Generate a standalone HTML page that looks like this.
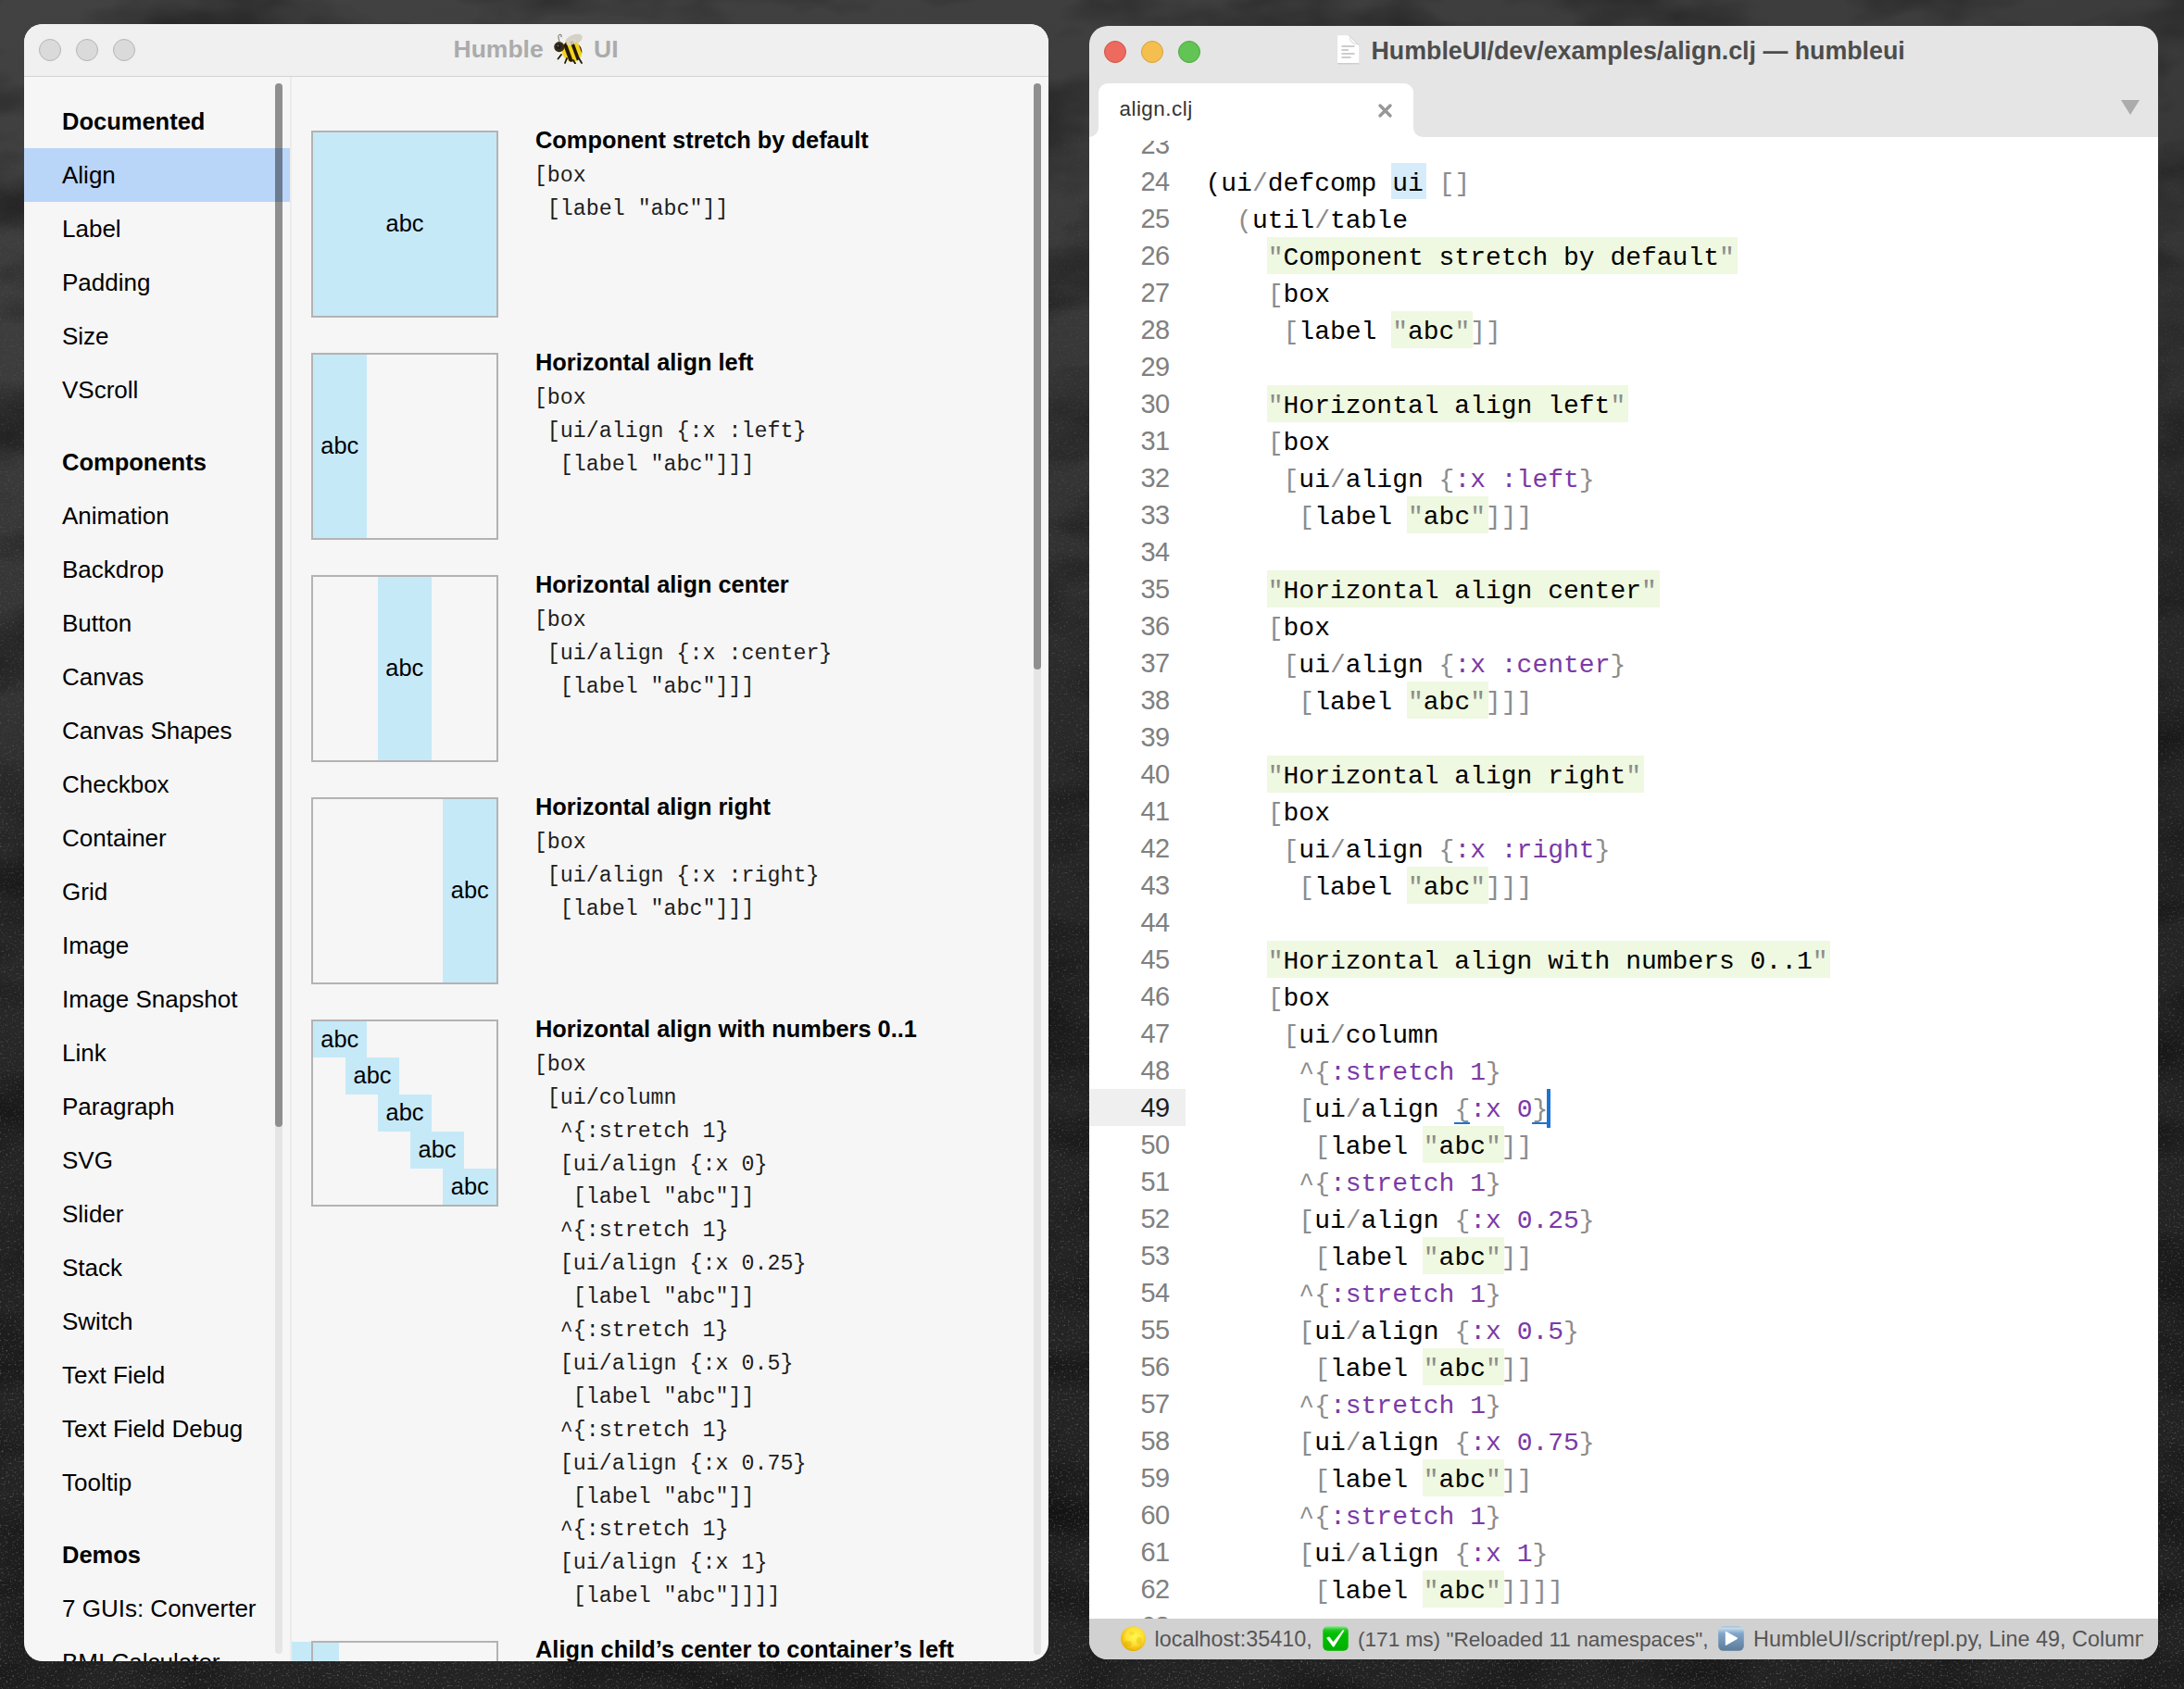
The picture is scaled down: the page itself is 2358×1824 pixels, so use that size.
<!DOCTYPE html>
<html><head><meta charset="utf-8"><title>Humble UI</title>
<style>
html,body{margin:0;padding:0;}
body{width:2358px;height:1824px;overflow:hidden;position:relative;
background:linear-gradient(170deg,#424242 0%,#3c3c3c 18%,#333 34%,#2a2a2a 42%,#252525 55%,#222 100%);}
.bgn{position:absolute;left:0;top:0;width:2358px;height:1824px;}
.win{position:absolute;border-radius:20px;overflow:hidden;}
.inner{position:absolute;width:2358px;height:1824px;}
.r{position:absolute;box-sizing:content-box;}
.ts{position:absolute;font-family:"Liberation Sans", sans-serif;white-space:pre;}
.tm{position:absolute;font-family:"Liberation Mono", monospace;white-space:pre;}
</style></head><body>
<svg class="bgn" width="2358" height="1824" viewBox="0 0 2358 1824">
<defs>
<filter id="nz" x="0" y="0" width="100%" height="100%"><feTurbulence type="fractalNoise" baseFrequency="0.006 0.012" numOctaves="4" seed="11"/>
<feColorMatrix type="matrix" values="0 0 0 0 0  0 0 0 0 0  0 0 0 0 0  -2.2 0 0 0 1.25"/></filter>
<filter id="sp" x="0" y="0" width="100%" height="100%"><feTurbulence type="fractalNoise" baseFrequency="0.45" numOctaves="2" seed="5"/>
<feColorMatrix type="matrix" values="0 0 0 0 1  0 0 0 0 1  0 0 0 0 1  3 0 0 0 -1.75"/></filter>
<linearGradient id="spm" x1="0" y1="0" x2="0" y2="1"><stop offset="0" stop-color="#fff" stop-opacity="0"/><stop offset="0.35" stop-color="#fff" stop-opacity="0.5"/><stop offset="1" stop-color="#fff" stop-opacity="1"/></linearGradient>
<mask id="spmask"><rect width="2358" height="1824" fill="url(#spm)"/></mask>
</defs>
<rect width="2358" height="1824" filter="url(#nz)" opacity="0.45"/>
<g mask="url(#spmask)"><rect width="2358" height="1824" filter="url(#sp)" opacity="0.3"/></g>
</svg>
<div class="win" style="left:26px;top:26px;width:1106px;height:1768px;background:#f6f6f6;">
<div class="inner" style="left:-26px;top:-26px;">
<div class="r" style="left:26.00px;top:26.00px;width:1106.00px;height:56.00px;background:#f0f0f0;"></div>
<div class="r" style="left:26.00px;top:82.00px;width:1106.00px;height:1.00px;background:#d3d3d3;"></div>
<div class="r" style="left:42px;top:42px;width:22px;height:22px;border-radius:50%;background:#dadada;border:1px solid #b4b4b4;"></div>
<div class="r" style="left:82px;top:42px;width:22px;height:22px;border-radius:50%;background:#dadada;border:1px solid #b4b4b4;"></div>
<div class="r" style="left:122px;top:42px;width:22px;height:22px;border-radius:50%;background:#dadada;border:1px solid #b4b4b4;"></div>
<div class="ts" style="left:489.50px;top:35.71px;font-size:26.5px;line-height:34px;color:#ababab;font-weight:bold;">Humble</div>
<svg class="r" style="left:597.5px;top:35.5px;" width="33" height="33" viewBox="0 0 33 33">
<defs><clipPath id="bc"><ellipse cx="19.5" cy="19.5" rx="10.5" ry="11.5" transform="rotate(-25 19.5 19.5)"/></clipPath></defs>
<path d="M6 9 C5 5 4 2 6 1.5 C8 1 9 3 7.5 4" stroke="#8a8578" stroke-width="1.2" fill="none"/>
<ellipse cx="21.5" cy="6.8" rx="9.8" ry="5.3" fill="#d6d1c4" transform="rotate(-22 21.5 6.8)"/>
<ellipse cx="19.5" cy="19.5" rx="10.5" ry="11.5" fill="#f4d41e" transform="rotate(-25 19.5 19.5)"/>
<g clip-path="url(#bc)">
<path d="M11 9 L19 31" stroke="#231a05" stroke-width="4"/>
<path d="M18.5 7 L27 30" stroke="#231a05" stroke-width="3.6"/>
<path d="M26 6 L33 26" stroke="#231a05" stroke-width="2.5"/>
</g>
<ellipse cx="19" cy="9.5" rx="6" ry="3" fill="#dcd7cb" opacity="0.85" transform="rotate(-22 19 9.5)"/>
<circle cx="5.8" cy="14.6" r="5.6" fill="#3b2c0c"/>
<circle cx="5.2" cy="14.2" r="2.8" fill="#1b1e28"/>
<circle cx="4.4" cy="13.3" r="0.9" fill="#6d7890"/>
<path d="M8 23 L4.5 27.5 M14 27 L12 32 M21 29 L23 32.5 M27 27 L30 32" stroke="#231a05" stroke-width="1.8" stroke-linecap="round"/>
</svg>
<div class="ts" style="left:641.00px;top:35.71px;font-size:26.5px;line-height:34px;color:#ababab;font-weight:bold;">UI</div>
<div class="r" style="left:26.00px;top:160.00px;width:287.00px;height:58.00px;background:#b9d5f8;"></div>
<div class="r" style="left:313.00px;top:83.00px;width:2.00px;height:1711.00px;background:#ececec;"></div>
<div class="ts" style="left:67.00px;top:114.66px;font-size:25.5px;line-height:33px;color:#000;font-weight:bold;">Documented</div>
<div class="ts" style="left:67.00px;top:171.99px;font-size:26px;line-height:34px;color:#000;">Align</div>
<div class="ts" style="left:67.00px;top:229.99px;font-size:26px;line-height:34px;color:#000;">Label</div>
<div class="ts" style="left:67.00px;top:287.99px;font-size:26px;line-height:34px;color:#000;">Padding</div>
<div class="ts" style="left:67.00px;top:345.99px;font-size:26px;line-height:34px;color:#000;">Size</div>
<div class="ts" style="left:67.00px;top:403.99px;font-size:26px;line-height:34px;color:#000;">VScroll</div>
<div class="ts" style="left:67.00px;top:482.66px;font-size:25.5px;line-height:33px;color:#000;font-weight:bold;">Components</div>
<div class="ts" style="left:67.00px;top:539.99px;font-size:26px;line-height:34px;color:#000;">Animation</div>
<div class="ts" style="left:67.00px;top:597.99px;font-size:26px;line-height:34px;color:#000;">Backdrop</div>
<div class="ts" style="left:67.00px;top:655.99px;font-size:26px;line-height:34px;color:#000;">Button</div>
<div class="ts" style="left:67.00px;top:713.99px;font-size:26px;line-height:34px;color:#000;">Canvas</div>
<div class="ts" style="left:67.00px;top:771.99px;font-size:26px;line-height:34px;color:#000;">Canvas Shapes</div>
<div class="ts" style="left:67.00px;top:829.99px;font-size:26px;line-height:34px;color:#000;">Checkbox</div>
<div class="ts" style="left:67.00px;top:887.99px;font-size:26px;line-height:34px;color:#000;">Container</div>
<div class="ts" style="left:67.00px;top:945.99px;font-size:26px;line-height:34px;color:#000;">Grid</div>
<div class="ts" style="left:67.00px;top:1003.99px;font-size:26px;line-height:34px;color:#000;">Image</div>
<div class="ts" style="left:67.00px;top:1061.99px;font-size:26px;line-height:34px;color:#000;">Image Snapshot</div>
<div class="ts" style="left:67.00px;top:1119.99px;font-size:26px;line-height:34px;color:#000;">Link</div>
<div class="ts" style="left:67.00px;top:1177.99px;font-size:26px;line-height:34px;color:#000;">Paragraph</div>
<div class="ts" style="left:67.00px;top:1235.99px;font-size:26px;line-height:34px;color:#000;">SVG</div>
<div class="ts" style="left:67.00px;top:1293.99px;font-size:26px;line-height:34px;color:#000;">Slider</div>
<div class="ts" style="left:67.00px;top:1351.99px;font-size:26px;line-height:34px;color:#000;">Stack</div>
<div class="ts" style="left:67.00px;top:1409.99px;font-size:26px;line-height:34px;color:#000;">Switch</div>
<div class="ts" style="left:67.00px;top:1467.99px;font-size:26px;line-height:34px;color:#000;">Text Field</div>
<div class="ts" style="left:67.00px;top:1525.99px;font-size:26px;line-height:34px;color:#000;">Text Field Debug</div>
<div class="ts" style="left:67.00px;top:1583.99px;font-size:26px;line-height:34px;color:#000;">Tooltip</div>
<div class="ts" style="left:67.00px;top:1662.66px;font-size:25.5px;line-height:33px;color:#000;font-weight:bold;">Demos</div>
<div class="ts" style="left:67.00px;top:1719.99px;font-size:26px;line-height:34px;color:#000;">7 GUIs: Converter</div>
<div class="ts" style="left:67.00px;top:1777.99px;font-size:26px;line-height:34px;color:#000;">BMI Calculator</div>
<div class="r" style="left:297.00px;top:90.00px;width:8.00px;height:1696.00px;background:rgba(0,0,0,0.065);border-radius:4px;"></div>
<div class="r" style="left:297.00px;top:90.00px;width:8.00px;height:1127.00px;background:rgba(0,0,0,0.375);border-radius:4px;"></div>
<div class="r" style="left:337.50px;top:142.50px;width:199.00px;height:199.00px;background:#c6e9f8;"></div>
<div class="r" style="left:336px;top:141px;width:198px;height:198px;border:2px solid #b3b3b3;"></div>
<div class="ts" style="left:397.00px;top:224.19px;width:80px;text-align:center;font-size:25.4px;line-height:34px;color:#000;">abc</div>
<div class="r" style="left:337.50px;top:382.50px;width:58.50px;height:199.00px;background:#c6e9f8;"></div>
<div class="r" style="left:336px;top:381px;width:198px;height:198px;border:2px solid #b3b3b3;"></div>
<div class="ts" style="left:326.75px;top:464.19px;width:80px;text-align:center;font-size:25.4px;line-height:34px;color:#000;">abc</div>
<div class="r" style="left:407.50px;top:622.50px;width:58.50px;height:199.00px;background:#c6e9f8;"></div>
<div class="r" style="left:336px;top:621px;width:198px;height:198px;border:2px solid #b3b3b3;"></div>
<div class="ts" style="left:396.75px;top:704.19px;width:80px;text-align:center;font-size:25.4px;line-height:34px;color:#000;">abc</div>
<div class="r" style="left:478.00px;top:862.50px;width:58.50px;height:199.00px;background:#c6e9f8;"></div>
<div class="r" style="left:336px;top:861px;width:198px;height:198px;border:2px solid #b3b3b3;"></div>
<div class="ts" style="left:467.25px;top:944.19px;width:80px;text-align:center;font-size:25.4px;line-height:34px;color:#000;">abc</div>
<div class="r" style="left:337.50px;top:1102.50px;width:58.50px;height:39.80px;background:#c6e9f8;"></div>
<div class="r" style="left:373.00px;top:1142.30px;width:58.00px;height:39.80px;background:#c6e9f8;"></div>
<div class="r" style="left:408.00px;top:1182.10px;width:58.00px;height:39.80px;background:#c6e9f8;"></div>
<div class="r" style="left:443.00px;top:1221.90px;width:58.00px;height:39.80px;background:#c6e9f8;"></div>
<div class="r" style="left:478.00px;top:1261.70px;width:58.50px;height:39.80px;background:#c6e9f8;"></div>
<div class="r" style="left:336px;top:1101px;width:198px;height:198px;border:2px solid #b3b3b3;"></div>
<div class="ts" style="left:326.75px;top:1104.59px;width:80px;text-align:center;font-size:25.4px;line-height:34px;color:#000;">abc</div>
<div class="ts" style="left:362.00px;top:1144.39px;width:80px;text-align:center;font-size:25.4px;line-height:34px;color:#000;">abc</div>
<div class="ts" style="left:397.00px;top:1184.19px;width:80px;text-align:center;font-size:25.4px;line-height:34px;color:#000;">abc</div>
<div class="ts" style="left:432.00px;top:1223.99px;width:80px;text-align:center;font-size:25.4px;line-height:34px;color:#000;">abc</div>
<div class="ts" style="left:467.25px;top:1263.79px;width:80px;text-align:center;font-size:25.4px;line-height:34px;color:#000;">abc</div>
<div class="r" style="left:315px;top:1772.5px;width:51px;height:60px;background:#c6e9f8;"></div>
<div class="r" style="left:336px;top:1771.5px;width:198px;height:198px;border:2px solid #b3b3b3;"></div>
<div class="ts" style="left:578.00px;top:134.89px;font-size:25.4px;line-height:33px;color:#000;font-weight:bold;">Component stretch by default</div>
<div class="tm" style="left:576.80px;top:174.80px;font-size:23.3px;line-height:30px;color:#1e1e1e;">[box</div>
<div class="tm" style="left:576.80px;top:210.70px;font-size:23.3px;line-height:30px;color:#1e1e1e;">&nbsp;[label&nbsp;&quot;abc&quot;]]</div>
<div class="ts" style="left:578.00px;top:374.89px;font-size:25.4px;line-height:33px;color:#000;font-weight:bold;">Horizontal align left</div>
<div class="tm" style="left:576.80px;top:414.80px;font-size:23.3px;line-height:30px;color:#1e1e1e;">[box</div>
<div class="tm" style="left:576.80px;top:450.70px;font-size:23.3px;line-height:30px;color:#1e1e1e;">&nbsp;[ui/align&nbsp;{:x&nbsp;:left}</div>
<div class="tm" style="left:576.80px;top:486.60px;font-size:23.3px;line-height:30px;color:#1e1e1e;">&nbsp;&nbsp;[label&nbsp;&quot;abc&quot;]]]</div>
<div class="ts" style="left:578.00px;top:614.89px;font-size:25.4px;line-height:33px;color:#000;font-weight:bold;">Horizontal align center</div>
<div class="tm" style="left:576.80px;top:654.80px;font-size:23.3px;line-height:30px;color:#1e1e1e;">[box</div>
<div class="tm" style="left:576.80px;top:690.70px;font-size:23.3px;line-height:30px;color:#1e1e1e;">&nbsp;[ui/align&nbsp;{:x&nbsp;:center}</div>
<div class="tm" style="left:576.80px;top:726.60px;font-size:23.3px;line-height:30px;color:#1e1e1e;">&nbsp;&nbsp;[label&nbsp;&quot;abc&quot;]]]</div>
<div class="ts" style="left:578.00px;top:854.89px;font-size:25.4px;line-height:33px;color:#000;font-weight:bold;">Horizontal align right</div>
<div class="tm" style="left:576.80px;top:894.80px;font-size:23.3px;line-height:30px;color:#1e1e1e;">[box</div>
<div class="tm" style="left:576.80px;top:930.70px;font-size:23.3px;line-height:30px;color:#1e1e1e;">&nbsp;[ui/align&nbsp;{:x&nbsp;:right}</div>
<div class="tm" style="left:576.80px;top:966.60px;font-size:23.3px;line-height:30px;color:#1e1e1e;">&nbsp;&nbsp;[label&nbsp;&quot;abc&quot;]]]</div>
<div class="ts" style="left:578.00px;top:1094.89px;font-size:25.4px;line-height:33px;color:#000;font-weight:bold;">Horizontal align with numbers 0..1</div>
<div class="tm" style="left:576.80px;top:1134.80px;font-size:23.3px;line-height:30px;color:#1e1e1e;">[box</div>
<div class="tm" style="left:576.80px;top:1170.70px;font-size:23.3px;line-height:30px;color:#1e1e1e;">&nbsp;[ui/column</div>
<div class="tm" style="left:576.80px;top:1206.60px;font-size:23.3px;line-height:30px;color:#1e1e1e;">&nbsp;&nbsp;^{:stretch&nbsp;1}</div>
<div class="tm" style="left:576.80px;top:1242.50px;font-size:23.3px;line-height:30px;color:#1e1e1e;">&nbsp;&nbsp;[ui/align&nbsp;{:x&nbsp;0}</div>
<div class="tm" style="left:576.80px;top:1278.40px;font-size:23.3px;line-height:30px;color:#1e1e1e;">&nbsp;&nbsp;&nbsp;[label&nbsp;&quot;abc&quot;]]</div>
<div class="tm" style="left:576.80px;top:1314.30px;font-size:23.3px;line-height:30px;color:#1e1e1e;">&nbsp;&nbsp;^{:stretch&nbsp;1}</div>
<div class="tm" style="left:576.80px;top:1350.20px;font-size:23.3px;line-height:30px;color:#1e1e1e;">&nbsp;&nbsp;[ui/align&nbsp;{:x&nbsp;0.25}</div>
<div class="tm" style="left:576.80px;top:1386.10px;font-size:23.3px;line-height:30px;color:#1e1e1e;">&nbsp;&nbsp;&nbsp;[label&nbsp;&quot;abc&quot;]]</div>
<div class="tm" style="left:576.80px;top:1422.00px;font-size:23.3px;line-height:30px;color:#1e1e1e;">&nbsp;&nbsp;^{:stretch&nbsp;1}</div>
<div class="tm" style="left:576.80px;top:1457.90px;font-size:23.3px;line-height:30px;color:#1e1e1e;">&nbsp;&nbsp;[ui/align&nbsp;{:x&nbsp;0.5}</div>
<div class="tm" style="left:576.80px;top:1493.80px;font-size:23.3px;line-height:30px;color:#1e1e1e;">&nbsp;&nbsp;&nbsp;[label&nbsp;&quot;abc&quot;]]</div>
<div class="tm" style="left:576.80px;top:1529.70px;font-size:23.3px;line-height:30px;color:#1e1e1e;">&nbsp;&nbsp;^{:stretch&nbsp;1}</div>
<div class="tm" style="left:576.80px;top:1565.60px;font-size:23.3px;line-height:30px;color:#1e1e1e;">&nbsp;&nbsp;[ui/align&nbsp;{:x&nbsp;0.75}</div>
<div class="tm" style="left:576.80px;top:1601.50px;font-size:23.3px;line-height:30px;color:#1e1e1e;">&nbsp;&nbsp;&nbsp;[label&nbsp;&quot;abc&quot;]]</div>
<div class="tm" style="left:576.80px;top:1637.40px;font-size:23.3px;line-height:30px;color:#1e1e1e;">&nbsp;&nbsp;^{:stretch&nbsp;1}</div>
<div class="tm" style="left:576.80px;top:1673.30px;font-size:23.3px;line-height:30px;color:#1e1e1e;">&nbsp;&nbsp;[ui/align&nbsp;{:x&nbsp;1}</div>
<div class="tm" style="left:576.80px;top:1709.20px;font-size:23.3px;line-height:30px;color:#1e1e1e;">&nbsp;&nbsp;&nbsp;[label&nbsp;&quot;abc&quot;]]]]</div>
<div class="ts" style="left:578.00px;top:1765.39px;font-size:25.4px;line-height:33px;color:#000;font-weight:bold;">Align child’s center to container’s left</div>
<div class="r" style="left:1116.00px;top:90.00px;width:8.00px;height:1697.00px;background:rgba(0,0,0,0.065);border-radius:4px;"></div>
<div class="r" style="left:1116.00px;top:90.00px;width:8.00px;height:633.00px;background:rgba(0,0,0,0.375);border-radius:4px;"></div>
</div></div>
<div class="win" style="left:1176px;top:28px;width:1154px;height:1764px;background:#e5e5e5;">
<div class="inner" style="left:-1176px;top:-28px;">
<div class="r" style="left:1192px;top:43.6px;width:22px;height:22px;border-radius:50%;background:#ed6a5e;border:1px solid #d05347;"></div>
<div class="r" style="left:1232px;top:43.6px;width:22px;height:22px;border-radius:50%;background:#f5bf4f;border:1px solid #d6a03a;"></div>
<div class="r" style="left:1272px;top:43.6px;width:22px;height:22px;border-radius:50%;background:#61c454;border:1px solid #4ea83f;"></div>
<svg class="r" style="left:1443px;top:38px;" width="27" height="33" viewBox="0 0 27 33">
<path d="M1.1 30.6 H24.2" stroke="#bcbcbc" stroke-width="1.2"/>
<path d="M1.1 0.3 H13.3 L24.2 10.9 V30.3 H1.1 Z" fill="#ffffff"/>
<path d="M13.3 0.3 L24.2 10.9" stroke="#d8d8d8" stroke-width="1.2"/>
<path d="M14 3 C15 7 17 9 22 10" stroke="#e2e2e2" stroke-width="1.2" fill="none"/>
<path d="M6 12 H19 M6 16 H12.5 M6 20 H19 M6 24 H15" stroke="#bdbdbd" stroke-width="1.6" stroke-linecap="round"/>
</svg>
<div class="ts" style="left:1480.50px;top:38.21px;font-size:26.8px;line-height:35px;color:#4d4d4d;font-weight:bold;">HumbleUI/dev/examples/align.clj — humbleui</div>
<div class="r" style="left:1176.00px;top:147.70px;width:1154.00px;height:1600.70px;background:#ffffff;"></div>
<div class="r" style="left:1186.00px;top:90.00px;width:340.00px;height:59.00px;background:#ffffff;border-radius:10px 10px 0 0;"></div>
<div class="r" style="left:1176.00px;top:138.00px;width:10.00px;height:9.70px;background:#ffffff;"></div>
<div class="r" style="left:1526.00px;top:138.00px;width:14.00px;height:9.70px;background:#ffffff;"></div>
<div class="r" style="left:1168.00px;top:90.00px;width:18.00px;height:57.70px;background:#e5e5e5;border-radius:0 0 10px 0;"></div>
<div class="r" style="left:1526.00px;top:90.00px;width:814.00px;height:57.70px;background:#e5e5e5;border-radius:0 0 0 10px;"></div>
<div class="ts" style="left:1208.50px;top:103.00px;font-size:22.5px;line-height:29px;color:#333;letter-spacing:0.45px;">align.clj</div>
<svg class="r" style="left:1486.5px;top:110.5px;" width="17" height="17" viewBox="0 0 17 17">
<path d="M3 3 L14 14 M14 3 L3 14" stroke="#979797" stroke-width="3.4" stroke-linecap="round"/></svg>
<svg class="r" style="left:2289px;top:107px;" width="22" height="18" viewBox="0 0 22 18">
<path d="M1 1 H21 L11 17 Z" fill="#acacac"/></svg>
<div class="r" style="left:1176.00px;top:1176.00px;width:104.00px;height:40.00px;background:#efefef;"></div>
<div class="r" style="left:1502.10px;top:175.70px;width:37.60px;height:39.80px;background:#d7ecfb;"></div>
<div class="r" style="left:1367.70px;top:256.00px;width:508.00px;height:40.00px;background:#eff8e0;"></div>
<div class="r" style="left:1502.10px;top:336.00px;width:88.00px;height:40.00px;background:#eff8e0;"></div>
<div class="r" style="left:1367.70px;top:416.00px;width:390.40px;height:40.00px;background:#eff8e0;"></div>
<div class="r" style="left:1518.90px;top:536.00px;width:88.00px;height:40.00px;background:#eff8e0;"></div>
<div class="r" style="left:1367.70px;top:616.00px;width:424.00px;height:40.00px;background:#eff8e0;"></div>
<div class="r" style="left:1518.90px;top:736.00px;width:88.00px;height:40.00px;background:#eff8e0;"></div>
<div class="r" style="left:1367.70px;top:816.00px;width:407.20px;height:40.00px;background:#eff8e0;"></div>
<div class="r" style="left:1518.90px;top:936.00px;width:88.00px;height:40.00px;background:#eff8e0;"></div>
<div class="r" style="left:1367.70px;top:1016.00px;width:608.80px;height:40.00px;background:#eff8e0;"></div>
<div class="r" style="left:1535.70px;top:1216.00px;width:88.00px;height:40.00px;background:#eff8e0;"></div>
<div class="r" style="left:1535.70px;top:1336.00px;width:88.00px;height:40.00px;background:#eff8e0;"></div>
<div class="r" style="left:1535.70px;top:1456.00px;width:88.00px;height:40.00px;background:#eff8e0;"></div>
<div class="r" style="left:1535.70px;top:1576.00px;width:88.00px;height:40.00px;background:#eff8e0;"></div>
<div class="r" style="left:1535.70px;top:1696.00px;width:88.00px;height:40.00px;background:#eff8e0;"></div>
<div class="r" style="left:1176px;top:152px;width:1154px;height:1596.4px;overflow:hidden;"><div class="r" style="left:-1176px;top:-152px;width:2358px;height:1824px;">
<div class="ts" style="left:1180px;width:82.5px;text-align:right;top:135.95px;font-size:29px;line-height:40px;letter-spacing:-0.6px;color:#808080;">23</div>
<div class="ts" style="left:1180px;width:82.5px;text-align:right;top:175.95px;font-size:29px;line-height:40px;letter-spacing:-0.6px;color:#808080;">24</div>
<div class="tm" style="left:1301.5px;top:178.55px;font-size:28px;line-height:40px;color:#000;">(ui<span style="color:#8c8c8c">/</span>defcomp&nbsp;ui&nbsp;<span style="color:#8c8c8c">[</span><span style="color:#8c8c8c">]</span></div>
<div class="ts" style="left:1180px;width:82.5px;text-align:right;top:215.95px;font-size:29px;line-height:40px;letter-spacing:-0.6px;color:#808080;">25</div>
<div class="tm" style="left:1301.5px;top:218.55px;font-size:28px;line-height:40px;color:#000;">&nbsp;&nbsp;<span style="color:#8c8c8c">(</span>util<span style="color:#8c8c8c">/</span>table</div>
<div class="ts" style="left:1180px;width:82.5px;text-align:right;top:255.95px;font-size:29px;line-height:40px;letter-spacing:-0.6px;color:#808080;">26</div>
<div class="tm" style="left:1301.5px;top:258.55px;font-size:28px;line-height:40px;color:#000;">&nbsp;&nbsp;&nbsp;&nbsp;<span style="color:#8c8c8c">&quot;</span>Component&nbsp;stretch&nbsp;by&nbsp;default<span style="color:#8c8c8c">&quot;</span></div>
<div class="ts" style="left:1180px;width:82.5px;text-align:right;top:295.95px;font-size:29px;line-height:40px;letter-spacing:-0.6px;color:#808080;">27</div>
<div class="tm" style="left:1301.5px;top:298.55px;font-size:28px;line-height:40px;color:#000;">&nbsp;&nbsp;&nbsp;&nbsp;<span style="color:#8c8c8c">[</span>box</div>
<div class="ts" style="left:1180px;width:82.5px;text-align:right;top:335.95px;font-size:29px;line-height:40px;letter-spacing:-0.6px;color:#808080;">28</div>
<div class="tm" style="left:1301.5px;top:338.55px;font-size:28px;line-height:40px;color:#000;">&nbsp;&nbsp;&nbsp;&nbsp;&nbsp;<span style="color:#8c8c8c">[</span>label&nbsp;<span style="color:#8c8c8c">&quot;</span>abc<span style="color:#8c8c8c">&quot;</span><span style="color:#8c8c8c">]</span><span style="color:#8c8c8c">]</span></div>
<div class="ts" style="left:1180px;width:82.5px;text-align:right;top:375.95px;font-size:29px;line-height:40px;letter-spacing:-0.6px;color:#808080;">29</div>
<div class="ts" style="left:1180px;width:82.5px;text-align:right;top:415.95px;font-size:29px;line-height:40px;letter-spacing:-0.6px;color:#808080;">30</div>
<div class="tm" style="left:1301.5px;top:418.55px;font-size:28px;line-height:40px;color:#000;">&nbsp;&nbsp;&nbsp;&nbsp;<span style="color:#8c8c8c">&quot;</span>Horizontal&nbsp;align&nbsp;left<span style="color:#8c8c8c">&quot;</span></div>
<div class="ts" style="left:1180px;width:82.5px;text-align:right;top:455.95px;font-size:29px;line-height:40px;letter-spacing:-0.6px;color:#808080;">31</div>
<div class="tm" style="left:1301.5px;top:458.55px;font-size:28px;line-height:40px;color:#000;">&nbsp;&nbsp;&nbsp;&nbsp;<span style="color:#8c8c8c">[</span>box</div>
<div class="ts" style="left:1180px;width:82.5px;text-align:right;top:495.95px;font-size:29px;line-height:40px;letter-spacing:-0.6px;color:#808080;">32</div>
<div class="tm" style="left:1301.5px;top:498.55px;font-size:28px;line-height:40px;color:#000;">&nbsp;&nbsp;&nbsp;&nbsp;&nbsp;<span style="color:#8c8c8c">[</span>ui<span style="color:#8c8c8c">/</span>align&nbsp;<span style="color:#8c8c8c">{</span><span style="color:#7b3aa6">:x</span>&nbsp;<span style="color:#7b3aa6">:left</span><span style="color:#8c8c8c">}</span></div>
<div class="ts" style="left:1180px;width:82.5px;text-align:right;top:535.95px;font-size:29px;line-height:40px;letter-spacing:-0.6px;color:#808080;">33</div>
<div class="tm" style="left:1301.5px;top:538.55px;font-size:28px;line-height:40px;color:#000;">&nbsp;&nbsp;&nbsp;&nbsp;&nbsp;&nbsp;<span style="color:#8c8c8c">[</span>label&nbsp;<span style="color:#8c8c8c">&quot;</span>abc<span style="color:#8c8c8c">&quot;</span><span style="color:#8c8c8c">]</span><span style="color:#8c8c8c">]</span><span style="color:#8c8c8c">]</span></div>
<div class="ts" style="left:1180px;width:82.5px;text-align:right;top:575.95px;font-size:29px;line-height:40px;letter-spacing:-0.6px;color:#808080;">34</div>
<div class="ts" style="left:1180px;width:82.5px;text-align:right;top:615.95px;font-size:29px;line-height:40px;letter-spacing:-0.6px;color:#808080;">35</div>
<div class="tm" style="left:1301.5px;top:618.55px;font-size:28px;line-height:40px;color:#000;">&nbsp;&nbsp;&nbsp;&nbsp;<span style="color:#8c8c8c">&quot;</span>Horizontal&nbsp;align&nbsp;center<span style="color:#8c8c8c">&quot;</span></div>
<div class="ts" style="left:1180px;width:82.5px;text-align:right;top:655.95px;font-size:29px;line-height:40px;letter-spacing:-0.6px;color:#808080;">36</div>
<div class="tm" style="left:1301.5px;top:658.55px;font-size:28px;line-height:40px;color:#000;">&nbsp;&nbsp;&nbsp;&nbsp;<span style="color:#8c8c8c">[</span>box</div>
<div class="ts" style="left:1180px;width:82.5px;text-align:right;top:695.95px;font-size:29px;line-height:40px;letter-spacing:-0.6px;color:#808080;">37</div>
<div class="tm" style="left:1301.5px;top:698.55px;font-size:28px;line-height:40px;color:#000;">&nbsp;&nbsp;&nbsp;&nbsp;&nbsp;<span style="color:#8c8c8c">[</span>ui<span style="color:#8c8c8c">/</span>align&nbsp;<span style="color:#8c8c8c">{</span><span style="color:#7b3aa6">:x</span>&nbsp;<span style="color:#7b3aa6">:center</span><span style="color:#8c8c8c">}</span></div>
<div class="ts" style="left:1180px;width:82.5px;text-align:right;top:735.95px;font-size:29px;line-height:40px;letter-spacing:-0.6px;color:#808080;">38</div>
<div class="tm" style="left:1301.5px;top:738.55px;font-size:28px;line-height:40px;color:#000;">&nbsp;&nbsp;&nbsp;&nbsp;&nbsp;&nbsp;<span style="color:#8c8c8c">[</span>label&nbsp;<span style="color:#8c8c8c">&quot;</span>abc<span style="color:#8c8c8c">&quot;</span><span style="color:#8c8c8c">]</span><span style="color:#8c8c8c">]</span><span style="color:#8c8c8c">]</span></div>
<div class="ts" style="left:1180px;width:82.5px;text-align:right;top:775.95px;font-size:29px;line-height:40px;letter-spacing:-0.6px;color:#808080;">39</div>
<div class="ts" style="left:1180px;width:82.5px;text-align:right;top:815.95px;font-size:29px;line-height:40px;letter-spacing:-0.6px;color:#808080;">40</div>
<div class="tm" style="left:1301.5px;top:818.55px;font-size:28px;line-height:40px;color:#000;">&nbsp;&nbsp;&nbsp;&nbsp;<span style="color:#8c8c8c">&quot;</span>Horizontal&nbsp;align&nbsp;right<span style="color:#8c8c8c">&quot;</span></div>
<div class="ts" style="left:1180px;width:82.5px;text-align:right;top:855.95px;font-size:29px;line-height:40px;letter-spacing:-0.6px;color:#808080;">41</div>
<div class="tm" style="left:1301.5px;top:858.55px;font-size:28px;line-height:40px;color:#000;">&nbsp;&nbsp;&nbsp;&nbsp;<span style="color:#8c8c8c">[</span>box</div>
<div class="ts" style="left:1180px;width:82.5px;text-align:right;top:895.95px;font-size:29px;line-height:40px;letter-spacing:-0.6px;color:#808080;">42</div>
<div class="tm" style="left:1301.5px;top:898.55px;font-size:28px;line-height:40px;color:#000;">&nbsp;&nbsp;&nbsp;&nbsp;&nbsp;<span style="color:#8c8c8c">[</span>ui<span style="color:#8c8c8c">/</span>align&nbsp;<span style="color:#8c8c8c">{</span><span style="color:#7b3aa6">:x</span>&nbsp;<span style="color:#7b3aa6">:right</span><span style="color:#8c8c8c">}</span></div>
<div class="ts" style="left:1180px;width:82.5px;text-align:right;top:935.95px;font-size:29px;line-height:40px;letter-spacing:-0.6px;color:#808080;">43</div>
<div class="tm" style="left:1301.5px;top:938.55px;font-size:28px;line-height:40px;color:#000;">&nbsp;&nbsp;&nbsp;&nbsp;&nbsp;&nbsp;<span style="color:#8c8c8c">[</span>label&nbsp;<span style="color:#8c8c8c">&quot;</span>abc<span style="color:#8c8c8c">&quot;</span><span style="color:#8c8c8c">]</span><span style="color:#8c8c8c">]</span><span style="color:#8c8c8c">]</span></div>
<div class="ts" style="left:1180px;width:82.5px;text-align:right;top:975.95px;font-size:29px;line-height:40px;letter-spacing:-0.6px;color:#808080;">44</div>
<div class="ts" style="left:1180px;width:82.5px;text-align:right;top:1015.95px;font-size:29px;line-height:40px;letter-spacing:-0.6px;color:#808080;">45</div>
<div class="tm" style="left:1301.5px;top:1018.55px;font-size:28px;line-height:40px;color:#000;">&nbsp;&nbsp;&nbsp;&nbsp;<span style="color:#8c8c8c">&quot;</span>Horizontal&nbsp;align&nbsp;with&nbsp;numbers&nbsp;0..1<span style="color:#8c8c8c">&quot;</span></div>
<div class="ts" style="left:1180px;width:82.5px;text-align:right;top:1055.95px;font-size:29px;line-height:40px;letter-spacing:-0.6px;color:#808080;">46</div>
<div class="tm" style="left:1301.5px;top:1058.55px;font-size:28px;line-height:40px;color:#000;">&nbsp;&nbsp;&nbsp;&nbsp;<span style="color:#8c8c8c">[</span>box</div>
<div class="ts" style="left:1180px;width:82.5px;text-align:right;top:1095.95px;font-size:29px;line-height:40px;letter-spacing:-0.6px;color:#808080;">47</div>
<div class="tm" style="left:1301.5px;top:1098.55px;font-size:28px;line-height:40px;color:#000;">&nbsp;&nbsp;&nbsp;&nbsp;&nbsp;<span style="color:#8c8c8c">[</span>ui<span style="color:#8c8c8c">/</span>column</div>
<div class="ts" style="left:1180px;width:82.5px;text-align:right;top:1135.95px;font-size:29px;line-height:40px;letter-spacing:-0.6px;color:#808080;">48</div>
<div class="tm" style="left:1301.5px;top:1138.55px;font-size:28px;line-height:40px;color:#000;">&nbsp;&nbsp;&nbsp;&nbsp;&nbsp;&nbsp;<span style="color:#8c8c8c">^</span><span style="color:#8c8c8c">{</span><span style="color:#7b3aa6">:stretch</span>&nbsp;<span style="color:#7b3aa6">1</span><span style="color:#8c8c8c">}</span></div>
<div class="ts" style="left:1180px;width:82.5px;text-align:right;top:1175.95px;font-size:29px;line-height:40px;letter-spacing:-0.6px;color:#1e1e1e;">49</div>
<div class="tm" style="left:1301.5px;top:1178.55px;font-size:28px;line-height:40px;color:#000;">&nbsp;&nbsp;&nbsp;&nbsp;&nbsp;&nbsp;<span style="color:#8c8c8c">[</span>ui<span style="color:#8c8c8c">/</span>align&nbsp;<span style="color:#8c8c8c">{</span><span style="color:#7b3aa6">:x</span>&nbsp;<span style="color:#7b3aa6">0</span><span style="color:#8c8c8c">}</span></div>
<div class="ts" style="left:1180px;width:82.5px;text-align:right;top:1215.95px;font-size:29px;line-height:40px;letter-spacing:-0.6px;color:#808080;">50</div>
<div class="tm" style="left:1301.5px;top:1218.55px;font-size:28px;line-height:40px;color:#000;">&nbsp;&nbsp;&nbsp;&nbsp;&nbsp;&nbsp;&nbsp;<span style="color:#8c8c8c">[</span>label&nbsp;<span style="color:#8c8c8c">&quot;</span>abc<span style="color:#8c8c8c">&quot;</span><span style="color:#8c8c8c">]</span><span style="color:#8c8c8c">]</span></div>
<div class="ts" style="left:1180px;width:82.5px;text-align:right;top:1255.95px;font-size:29px;line-height:40px;letter-spacing:-0.6px;color:#808080;">51</div>
<div class="tm" style="left:1301.5px;top:1258.55px;font-size:28px;line-height:40px;color:#000;">&nbsp;&nbsp;&nbsp;&nbsp;&nbsp;&nbsp;<span style="color:#8c8c8c">^</span><span style="color:#8c8c8c">{</span><span style="color:#7b3aa6">:stretch</span>&nbsp;<span style="color:#7b3aa6">1</span><span style="color:#8c8c8c">}</span></div>
<div class="ts" style="left:1180px;width:82.5px;text-align:right;top:1295.95px;font-size:29px;line-height:40px;letter-spacing:-0.6px;color:#808080;">52</div>
<div class="tm" style="left:1301.5px;top:1298.55px;font-size:28px;line-height:40px;color:#000;">&nbsp;&nbsp;&nbsp;&nbsp;&nbsp;&nbsp;<span style="color:#8c8c8c">[</span>ui<span style="color:#8c8c8c">/</span>align&nbsp;<span style="color:#8c8c8c">{</span><span style="color:#7b3aa6">:x</span>&nbsp;<span style="color:#7b3aa6">0.25</span><span style="color:#8c8c8c">}</span></div>
<div class="ts" style="left:1180px;width:82.5px;text-align:right;top:1335.95px;font-size:29px;line-height:40px;letter-spacing:-0.6px;color:#808080;">53</div>
<div class="tm" style="left:1301.5px;top:1338.55px;font-size:28px;line-height:40px;color:#000;">&nbsp;&nbsp;&nbsp;&nbsp;&nbsp;&nbsp;&nbsp;<span style="color:#8c8c8c">[</span>label&nbsp;<span style="color:#8c8c8c">&quot;</span>abc<span style="color:#8c8c8c">&quot;</span><span style="color:#8c8c8c">]</span><span style="color:#8c8c8c">]</span></div>
<div class="ts" style="left:1180px;width:82.5px;text-align:right;top:1375.95px;font-size:29px;line-height:40px;letter-spacing:-0.6px;color:#808080;">54</div>
<div class="tm" style="left:1301.5px;top:1378.55px;font-size:28px;line-height:40px;color:#000;">&nbsp;&nbsp;&nbsp;&nbsp;&nbsp;&nbsp;<span style="color:#8c8c8c">^</span><span style="color:#8c8c8c">{</span><span style="color:#7b3aa6">:stretch</span>&nbsp;<span style="color:#7b3aa6">1</span><span style="color:#8c8c8c">}</span></div>
<div class="ts" style="left:1180px;width:82.5px;text-align:right;top:1415.95px;font-size:29px;line-height:40px;letter-spacing:-0.6px;color:#808080;">55</div>
<div class="tm" style="left:1301.5px;top:1418.55px;font-size:28px;line-height:40px;color:#000;">&nbsp;&nbsp;&nbsp;&nbsp;&nbsp;&nbsp;<span style="color:#8c8c8c">[</span>ui<span style="color:#8c8c8c">/</span>align&nbsp;<span style="color:#8c8c8c">{</span><span style="color:#7b3aa6">:x</span>&nbsp;<span style="color:#7b3aa6">0.5</span><span style="color:#8c8c8c">}</span></div>
<div class="ts" style="left:1180px;width:82.5px;text-align:right;top:1455.95px;font-size:29px;line-height:40px;letter-spacing:-0.6px;color:#808080;">56</div>
<div class="tm" style="left:1301.5px;top:1458.55px;font-size:28px;line-height:40px;color:#000;">&nbsp;&nbsp;&nbsp;&nbsp;&nbsp;&nbsp;&nbsp;<span style="color:#8c8c8c">[</span>label&nbsp;<span style="color:#8c8c8c">&quot;</span>abc<span style="color:#8c8c8c">&quot;</span><span style="color:#8c8c8c">]</span><span style="color:#8c8c8c">]</span></div>
<div class="ts" style="left:1180px;width:82.5px;text-align:right;top:1495.95px;font-size:29px;line-height:40px;letter-spacing:-0.6px;color:#808080;">57</div>
<div class="tm" style="left:1301.5px;top:1498.55px;font-size:28px;line-height:40px;color:#000;">&nbsp;&nbsp;&nbsp;&nbsp;&nbsp;&nbsp;<span style="color:#8c8c8c">^</span><span style="color:#8c8c8c">{</span><span style="color:#7b3aa6">:stretch</span>&nbsp;<span style="color:#7b3aa6">1</span><span style="color:#8c8c8c">}</span></div>
<div class="ts" style="left:1180px;width:82.5px;text-align:right;top:1535.95px;font-size:29px;line-height:40px;letter-spacing:-0.6px;color:#808080;">58</div>
<div class="tm" style="left:1301.5px;top:1538.55px;font-size:28px;line-height:40px;color:#000;">&nbsp;&nbsp;&nbsp;&nbsp;&nbsp;&nbsp;<span style="color:#8c8c8c">[</span>ui<span style="color:#8c8c8c">/</span>align&nbsp;<span style="color:#8c8c8c">{</span><span style="color:#7b3aa6">:x</span>&nbsp;<span style="color:#7b3aa6">0.75</span><span style="color:#8c8c8c">}</span></div>
<div class="ts" style="left:1180px;width:82.5px;text-align:right;top:1575.95px;font-size:29px;line-height:40px;letter-spacing:-0.6px;color:#808080;">59</div>
<div class="tm" style="left:1301.5px;top:1578.55px;font-size:28px;line-height:40px;color:#000;">&nbsp;&nbsp;&nbsp;&nbsp;&nbsp;&nbsp;&nbsp;<span style="color:#8c8c8c">[</span>label&nbsp;<span style="color:#8c8c8c">&quot;</span>abc<span style="color:#8c8c8c">&quot;</span><span style="color:#8c8c8c">]</span><span style="color:#8c8c8c">]</span></div>
<div class="ts" style="left:1180px;width:82.5px;text-align:right;top:1615.95px;font-size:29px;line-height:40px;letter-spacing:-0.6px;color:#808080;">60</div>
<div class="tm" style="left:1301.5px;top:1618.55px;font-size:28px;line-height:40px;color:#000;">&nbsp;&nbsp;&nbsp;&nbsp;&nbsp;&nbsp;<span style="color:#8c8c8c">^</span><span style="color:#8c8c8c">{</span><span style="color:#7b3aa6">:stretch</span>&nbsp;<span style="color:#7b3aa6">1</span><span style="color:#8c8c8c">}</span></div>
<div class="ts" style="left:1180px;width:82.5px;text-align:right;top:1655.95px;font-size:29px;line-height:40px;letter-spacing:-0.6px;color:#808080;">61</div>
<div class="tm" style="left:1301.5px;top:1658.55px;font-size:28px;line-height:40px;color:#000;">&nbsp;&nbsp;&nbsp;&nbsp;&nbsp;&nbsp;<span style="color:#8c8c8c">[</span>ui<span style="color:#8c8c8c">/</span>align&nbsp;<span style="color:#8c8c8c">{</span><span style="color:#7b3aa6">:x</span>&nbsp;<span style="color:#7b3aa6">1</span><span style="color:#8c8c8c">}</span></div>
<div class="ts" style="left:1180px;width:82.5px;text-align:right;top:1695.95px;font-size:29px;line-height:40px;letter-spacing:-0.6px;color:#808080;">62</div>
<div class="tm" style="left:1301.5px;top:1698.55px;font-size:28px;line-height:40px;color:#000;">&nbsp;&nbsp;&nbsp;&nbsp;&nbsp;&nbsp;&nbsp;<span style="color:#8c8c8c">[</span>label&nbsp;<span style="color:#8c8c8c">&quot;</span>abc<span style="color:#8c8c8c">&quot;</span><span style="color:#8c8c8c">]</span><span style="color:#8c8c8c">]</span><span style="color:#8c8c8c">]</span><span style="color:#8c8c8c">]</span></div>
<div class="ts" style="left:1180px;width:82.5px;text-align:right;top:1735.95px;font-size:29px;line-height:40px;letter-spacing:-0.6px;color:#808080;">63</div>
</div></div>
<div class="r" style="left:1570.30px;top:1212.00px;width:16.80px;height:2.00px;background:#1b73d3;"></div>
<div class="r" style="left:1654.30px;top:1212.00px;width:16.80px;height:2.00px;background:#1b73d3;"></div>
<div class="r" style="left:1670.00px;top:1176.00px;width:4.00px;height:41.60px;background:#1b73d3;"></div>
<div class="r" style="left:1176.00px;top:1748.40px;width:1154.00px;height:43.60px;background:#d1d1d1;"></div>
<svg class="r" style="left:1210.2px;top:1755.6px;" width="27.2" height="27.2" viewBox="0 0 27.2 27.2">
<defs><radialGradient id="mg" cx="0.55" cy="0.4" r="0.62"><stop offset="0" stop-color="#fffb50"/><stop offset="0.55" stop-color="#ffdf35"/><stop offset="0.9" stop-color="#eab800"/><stop offset="1" stop-color="#dda000"/></radialGradient></defs>
<circle cx="13.6" cy="13.6" r="13.4" fill="url(#mg)"/>
<ellipse cx="8" cy="19" rx="4" ry="3" fill="#d9a400" opacity="0.35"/>
<ellipse cx="20" cy="16" rx="3" ry="4" fill="#d9a400" opacity="0.3"/>
<ellipse cx="12" cy="8" rx="3" ry="2" fill="#e8b800" opacity="0.3"/>
</svg>
<div class="ts" style="left:1246.50px;top:1754.79px;font-size:23.4px;line-height:30px;color:#555;">localhost:35410,</div>
<svg class="r" style="left:1428px;top:1756px;" width="28" height="27" viewBox="0 0 28 27">
<defs><linearGradient id="cg" x1="0" y1="0" x2="0" y2="1"><stop offset="0" stop-color="#8ee88e"/><stop offset="0.15" stop-color="#22c822"/><stop offset="0.3" stop-color="#00c000"/><stop offset="1" stop-color="#00b000"/></linearGradient></defs>
<rect x="0.3" y="0.2" width="27.4" height="26.6" rx="5" fill="url(#cg)"/>
<path d="M4 12.8 L7.2 11.6 L11.5 17 L21.8 4.3 L23.6 4.4 L12.3 22.6 L11.1 22.6 Z" fill="#ffffff"/>
</svg>
<div class="ts" style="left:1466.00px;top:1755.56px;font-size:22.6px;line-height:29px;color:#555;">(171 ms) &quot;Reloaded 11 namespaces&quot;,</div>
<svg class="r" style="left:1855px;top:1756px;" width="28" height="27" viewBox="0 0 28 27">
<defs><linearGradient id="pg" x1="0" y1="0" x2="0" y2="1"><stop offset="0" stop-color="#9dbcd8"/><stop offset="0.08" stop-color="#c6dbeb"/><stop offset="0.3" stop-color="#7fa5ca"/><stop offset="1" stop-color="#5d7b98"/></linearGradient></defs>
<rect x="0.2" y="0.2" width="27.6" height="26.6" rx="5.5" fill="url(#pg)"/>
<path d="M7.8 6.6 Q7.8 5.6 8.8 6.1 L20.6 12.6 Q21.5 13.4 20.6 14.1 L8.8 20.7 Q7.8 21.2 7.8 20.2 Z" fill="#ffffff"/>
</svg>
<div class="r" style="left:1893px;top:1748px;width:421px;height:44px;overflow:hidden;">
<div class="ts" style="left:0px;top:6.79px;font-size:23.4px;line-height:30px;color:#555;white-space:nowrap;">HumbleUI/script/repl.py, Line 49, Column 1</div>
</div>
</div></div>
</body></html>
